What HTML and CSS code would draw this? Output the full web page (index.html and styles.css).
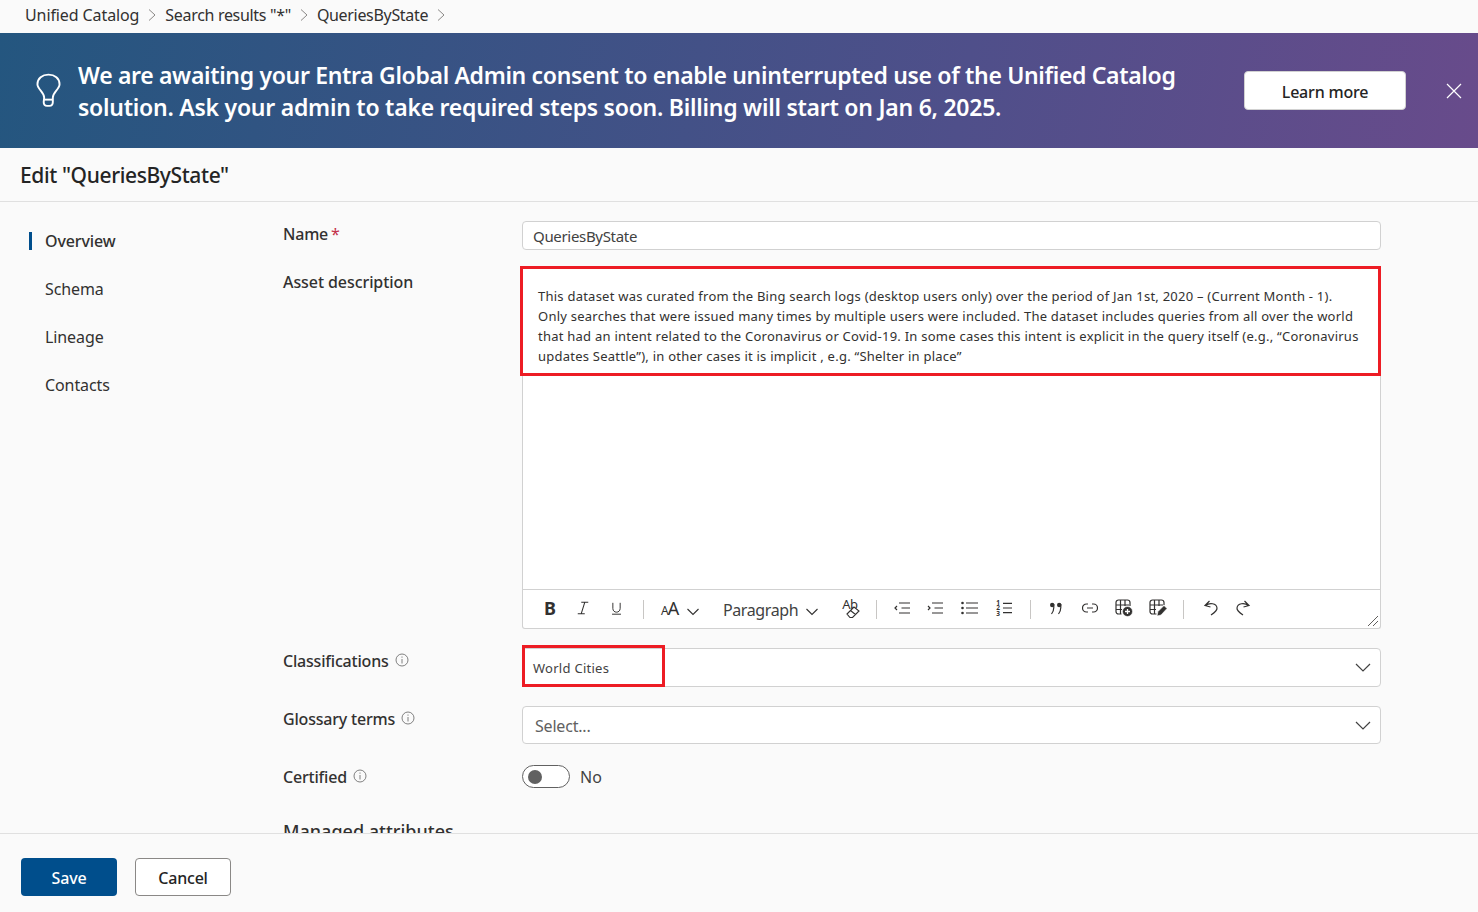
FILE: index.html
```html
<!DOCTYPE html>
<html lang="en-US">
<head>
    <meta charset="UTF-8">
    <meta name="viewport" content="width=device-width, initial-scale=1.0">
    <title>Edit QueriesByState</title>
    <link rel="stylesheet" href="styles.css">
</head>
<body>
    <nav class="breadcrumb">
        <a>Unified Catalog</a>
        <svg class="crumb-sep" viewBox="0 0 10 14"><path d="M2 1.500 8 7l-6 5.500"/></svg>
        <a class="crumb-tight">Search results "*"</a>
        <svg class="crumb-sep" viewBox="0 0 10 14"><path d="M2 1.500 8 7l-6 5.500"/></svg>
        <a class="crumb-tight">QueriesByState</a>
        <svg class="crumb-sep" viewBox="0 0 10 14"><path d="M2 1.500 8 7l-6 5.500"/></svg>
    </nav>

    <section class="banner">
        <svg class="banner-bulb" viewBox="0 0 26 36">
            <path d="M8.500 25.500c0-3-1.200-4.600-3.400-7.200C3.300 16.200 1.500 14 1.500 11.500 1.500 5.500 6.500 1.500 13 1.500s11.500 4 11.500 10c0 2.500-1.800 4.700-3.600 6.800-2.200 2.600-3.400 4.200-3.400 7.200v4.500c0 2.300-1.500 4-3.500 4h-2.500c-2.500 0-3.500-1.700-3.500-4z"/>
            <path d="M8.500 27.500h9"/>
        </svg>
        <p class="banner-text">We are awaiting your Entra Global Admin consent to enable uninterrupted use of the Unified Catalog<br><span class="banner-line2">solution. Ask your admin to take required steps soon. Billing will start on Jan 6, 2025.</span></p>
        <button class="btn-learn" type="button">Learn more</button>
        <svg class="banner-close" viewBox="0 0 16 16"><path d="M1 1l14 14M15 1 1 15"/></svg>
    </section>

    <header class="page-title">
        <h1>Edit "QueriesByState"</h1>
    </header>

    <main class="content">
        <aside class="side-nav">
            <a class="side-link active">Overview</a>
            <a class="side-link">Schema</a>
            <a class="side-link">Lineage</a>
            <a class="side-link">Contacts</a>
        </aside>

        <form class="edit-form">
            <div class="row row-name">
                <label class="field-label">Name <span class="req">*</span></label>
                <div class="text-input">QueriesByState</div>
            </div>

            <div class="row row-desc">
                <label class="field-label label-wide">Asset description</label>
                <div class="editor">
                    <div class="editor-body">
                        <div class="desc-highlight">This dataset was curated from the Bing search logs (desktop users only) over the period of Jan 1st, 2020 – (Current Month - 1).<br>Only searches that were issued many times by multiple users were included. The dataset includes queries from all over the world<br>that had an intent related to the Coronavirus or Covid-19. In some cases this intent is explicit in the query itself (e.g., “Coronavirus<br>updates Seattle”), in other cases it is implicit , e.g. “Shelter in place”</div>
                    </div>
                    <div class="toolbar">
                        <span class="tb-glyph tb-b">B</span>
                        <svg class="tb-icon tb-i" viewBox="0 0 16 16"><path d="M6 1.500h8M2 14.500h8M10 1.500 6 14.500"/></svg>
                        <svg class="tb-icon tb-u" viewBox="0 0 16 16"><path d="M3.500 1v7c0 6 9 6 9 0V1M2.500 15h11"/></svg>
                        <span class="tb-sep sep-1"></span>
                        <span class="tb-glyph tb-aa"><span class="aa-small">A</span>A</span>
                        <svg class="tb-chev tb-chev-aa" viewBox="0 0 14 8"><path d="M1.500 1 7 6.500 12.500 1"/></svg>
                        <span class="tb-para">Paragraph</span>
                        <svg class="tb-chev tb-chev-para" viewBox="0 0 14 8"><path d="M1.500 1 7 6.500 12.500 1"/></svg>
                        <span class="tb-clear">
                            <span class="tb-glyph tb-ab">Ab</span>
                            <svg class="tb-eraser" viewBox="0 0 14 12"><path d="M1 8 8 1l5 4-6.500 6.500H4zM4.500 4.500l5 4"/></svg>
                        </span>
                        <span class="tb-sep sep-2"></span>
                        <svg class="tb-icon tb-out" viewBox="0 0 18 12"><path d="M5 1h11M7.500 6H16M5 11h11M3 4 1 6l2 2"/></svg>
                        <svg class="tb-icon tb-in" viewBox="0 0 18 12"><path d="M5 1h11M7.500 6H16M5 11h11M1 4l2 2-2 2"/></svg>
                        <svg class="tb-icon tb-ul" viewBox="0 0 18 14"><path d="M5 2h12M5 7h12M5 12h12"/><circle class="dot" cx="1.500" cy="2" r="1.300"/><circle class="dot" cx="1.500" cy="7" r="1.300"/><circle class="dot" cx="1.500" cy="12" r="1.300"/></svg>
                        <span class="tb-ol">
                            <span class="tb-num">1<br>2<br>3</span>
                            <svg class="tb-ol-lines" viewBox="0 0 10 14"><path d="M0 2h10M0 7h10M0 12h10"/></svg>
                        </span>
                        <span class="tb-sep sep-3"></span>
                        <svg class="tb-icon tb-quote" viewBox="0 0 14 14"><path d="M4.800 3v3.500C4.800 9 4 11 2.500 13M11.800 3v3.500C11.800 9 11 11 9.500 13"/><circle class="dot" cx="3.200" cy="4" r="2.200"/><circle class="dot" cx="10.200" cy="4" r="2.200"/></svg>
                        <svg class="tb-icon tb-link" viewBox="0 0 16 10"><path d="M6 1H4.500a4 4 0 0 0 0 8H6M10 1h1.500a4 4 0 0 1 0 8H10M5 5h6"/></svg>
                        <svg class="tb-icon tb-table" viewBox="0 0 18 18"><path d="M3.500 1h9a2.500 2.500 0 0 1 2.500 2.500V7M1 3.500A2.500 2.500 0 0 1 3.500 1M1 3.500v9A2.500 2.500 0 0 0 3.500 15h3M1 6h13M1 10.500h6M5.500 1v14M10 1v6"/><circle class="solid" cx="12.500" cy="12.500" r="5"/><path class="cut" d="M12.500 10v5M10 12.500h5"/></svg>
                        <svg class="tb-icon tb-tedit" viewBox="0 0 18 18"><path d="M3.500 1h9A2.500 2.500 0 0 1 15 3.500V6M1 3.500A2.500 2.500 0 0 1 3.500 1M1 3.500v9A2.500 2.500 0 0 0 3.500 15h4M1 6h13M1 10.500h6M5.500 1v14M10 1v6"/><path class="solid" d="M8 17l1-4.500L15 6.500l3 3-6 6.500z"/></svg>
                        <span class="tb-sep sep-4"></span>
                        <svg class="tb-icon tb-undo" viewBox="0 0 16 16"><path d="M6.500 1 2 5.500 7.500 7M2.500 5.500c4-3 11-2.500 11.500 2.500.3 2.500-3 5-6 7"/></svg>
                        <svg class="tb-icon tb-redo" viewBox="0 0 16 16"><path d="M9.500 1 14 5.500 8.500 7M13.500 5.500c-4-3-11-2.500-11.500 2.500-.3 2.500 3 5 6 7"/></svg>
                        <svg class="tb-grip" viewBox="0 0 12 12"><path d="M1 11 11 1M6 11l5-5"/></svg>
                    </div>
                </div>
            </div>

            <div class="row row-class">
                <label class="field-label">Classifications <svg class="info" viewBox="0 0 14 14"><circle cx="7" cy="7" r="6"/><path d="M7 6v4.500M7 3.500v1.200"/></svg></label>
                <div class="select-input">
                    <span class="chip-text">World Cities</span>
                    <span class="chip-highlight"></span>
                    <svg class="select-chev" viewBox="0 0 16 9"><path d="M1 1l7 7 7-7"/></svg>
                </div>
            </div>

            <div class="row row-gloss">
                <label class="field-label">Glossary terms <svg class="info" viewBox="0 0 14 14"><circle cx="7" cy="7" r="6"/><path d="M7 6v4.500M7 3.500v1.200"/></svg></label>
                <div class="select-input select-empty">
                    <span class="placeholder">Select...</span>
                    <svg class="select-chev" viewBox="0 0 16 9"><path d="M1 1l7 7 7-7"/></svg>
                </div>
            </div>

            <div class="row row-cert">
                <label class="field-label label-cert">Certified <svg class="info" viewBox="0 0 14 14"><circle cx="7" cy="7" r="6"/><path d="M7 6v4.500M7 3.500v1.200"/></svg></label>
                <div class="toggle-wrap">
                    <span class="toggle"><span class="knob"></span></span>
                    <span class="toggle-text">No</span>
                </div>
            </div>

            <div class="row">
                <label class="field-label label-section">Managed attributes</label>
            </div>
        </form>
    </main>

    <footer class="actions">
        <button class="btn-save" type="button">Save</button>
        <button class="btn-cancel" type="button">Cancel</button>
    </footer>
</body>
</html>
```

FILE: styles.css
```css
* {
    box-sizing: border-box;
}

html, body {
    height: 100%;
}

body {
    margin: 0;
    display: flex;
    flex-direction: column;
    overflow: hidden;
    background: #fafafa;
    color: #242424;
    font-family: "Noto Sans", "Open Sans", sans-serif;
    font-size: 16px;
}

svg {
    display: block;
    fill: none;
    stroke: currentColor;
}

/* breadcrumb */
.breadcrumb {
    height: 33px;
    flex: none;
    display: flex;
    align-items: center;
    padding: 0 0 3px 25px;
    font-size: 16px;
    letter-spacing: -0.1px;
    color: #323130;
}

.crumb-tight {
    letter-spacing: -0.32px;
}

.crumb-sep {
    width: 10px;
    height: 14px;
    margin: 0 8px;
    color: #8a8886;
    stroke-width: 1;
}

/* banner */
.banner {
    height: 115px;
    flex: none;
    display: flex;
    align-items: center;
    padding-left: 36px;
    color: #fff;
    background: linear-gradient(100deg, #24567f 0%, #4f4f8a 65%, #684b8b 100%);
}

.banner-bulb {
    width: 25px;
    height: 35px;
    stroke-width: 2;
    flex: none;
}

.banner-text {
    margin: 0 0 0 17px;
    width: 1166px;
    flex: none;
    white-space: nowrap;
    font-size: 23px;
    font-weight: 600;
    line-height: 32px;
    letter-spacing: -0.33px;
}

.banner-line2 {
    letter-spacing: -0.25px;
}

.btn-learn {
    width: 162px;
    height: 39px;
    flex: none;
    padding-top: 3px;
    background: #fff;
    border: 1px solid #d1d1d1;
    border-radius: 4px;
    color: #242424;
    font-family: inherit;
    font-size: 16px;
    font-weight: 500;
    letter-spacing: -0.2px;
}

.banner-close {
    width: 16px;
    height: 16px;
    margin-left: 40px;
    stroke-width: 1.200;
    flex: none;
}

/* title */
.page-title {
    height: 54px;
    flex: none;
    display: flex;
    align-items: center;
    padding-left: 20px;
    border-bottom: 1px solid #e0e0e0;
}

.page-title h1 {
    margin: 0;
    font-size: 21px;
    font-weight: 500;
    letter-spacing: -0.38px;
}

/* main area */
.content {
    flex: 1;
    min-height: 0;
    overflow: hidden;
    display: flex;
}

.side-nav {
    width: 283px;
    flex: none;
    display: flex;
    flex-direction: column;
    padding: 15px 0 0 29px;
}

.side-link {
    height: 48px;
    display: flex;
    align-items: center;
    padding-left: 16px;
    font-size: 16px;
    letter-spacing: -0.1px;
    color: #323130;
}

.side-link.active {
    font-weight: 500;
    background: linear-gradient(#004e8c, #004e8c) left center / 3px 18px no-repeat;
}

.edit-form {
    width: 1098px;
    flex: none;
    padding-top: 19px;
}

.row {
    display: grid;
    grid-template-columns: 239px 859px;
}

.field-label {
    display: flex;
    align-items: center;
    gap: 6px;
    height: 26px;
    font-size: 16px;
    font-weight: 500;
    letter-spacing: -0.2px;
    color: #323130;
}

.label-wide {
    letter-spacing: -0.08px;
}

.label-cert {
    margin-top: -1px;
}

.label-section {
    white-space: nowrap;
    font-size: 18px;
    letter-spacing: 0;
}

.req {
    color: #c4314b;
    margin-left: -3px;
    font-weight: 400;
}

.info {
    width: 14px;
    height: 14px;
    color: #616161;
    stroke-width: 0.800;
    margin-top: -3px;
}

.row-name {
    margin-bottom: 16px;
}

.text-input {
    height: 29px;
    display: flex;
    align-items: center;
    padding-left: 10px;
    background: #fff;
    border: 1px solid #d1d1d1;
    border-radius: 4px;
    font-size: 15px;
    letter-spacing: -0.32px;
    color: #424242;
}

/* rich text editor */
.row-desc {
    margin-bottom: 19px;
}

.row-desc .field-label {
    margin-top: 3px;
}

.editor {
    height: 363px;
    display: flex;
    flex-direction: column;
    background: #fff;
    border: 1px solid #d1d1d1;
    border-top: 0;
    border-radius: 0 0 3px 3px;
}

.editor-body {
    flex: 1;
}

.desc-highlight {
    height: 110px;
    margin: 0 -1px 0 -3px;
    padding: 17px 0 0 15px;
    border: 3px solid #ed1c24;
    font-size: 13px;
    line-height: 20px;
    white-space: nowrap;
    letter-spacing: 0.24px;
    color: #323130;
}

.toolbar {
    height: 39px;
    flex: none;
    position: relative;
    display: flex;
    align-items: center;
    border-top: 1px solid #d1d1d1;
    color: #323130;
}

.tb-icon {
    flex: none;
    stroke-width: 1.200;
    margin-top: -2px;
}

.tb-icon .dot {
    fill: currentColor;
    stroke: none;
}

.tb-glyph {
    flex: none;
    line-height: 1;
}

.tb-b {
    width: 16px;
    margin: -3px 0 0 19px;
    font-size: 18px;
    font-weight: 700;
    text-align: center;
}

.tb-i { width: 14px; height: 14px; margin-left: 18px; }
.tb-u { width: 13px; height: 15px; margin-left: 20px; }
.sep-1 { margin-left: 20px; }

.tb-aa {
    width: 20px;
    margin: -3px 0 0 17px;
    font-size: 18px;
    letter-spacing: -1px;
    white-space: nowrap;
}

.aa-small {
    font-size: 12px;
}

.tb-chev-aa { margin-left: 5px; }
.tb-para { margin: 1px 0 0 23px; font-size: 16px; letter-spacing: -0.4px; color: #424242; }
.tb-chev-para { margin-left: 7px; }

.tb-clear {
    position: relative;
    flex: none;
    width: 20px;
    height: 20px;
    margin: -2px 0 0 23px;
}

.tb-ab {
    display: block;
    font-size: 13px;
    letter-spacing: -0.5px;
}

.tb-eraser {
    position: absolute;
    left: 4px;
    top: 8px;
    width: 14px;
    height: 12px;
    stroke-width: 1.100;
    fill: #fff;
}

.sep-2 { margin-left: 14px; }
.tb-out { width: 18px; height: 12px; margin-left: 17px; }
.tb-in { width: 18px; height: 12px; margin-left: 15px; }
.tb-ul { width: 18px; height: 14px; margin-left: 16px; }

.tb-ol {
    flex: none;
    display: flex;
    align-items: center;
    gap: 2px;
    width: 16px;
    margin: -2px 0 0 17px;
}

.tb-num {
    width: 5px;
    font-size: 6.500px;
    font-weight: 700;
    line-height: 5.500px;
}

.tb-ol-lines {
    width: 10px;
    height: 14px;
    stroke-width: 1.200;
}

.sep-3 { margin-left: 18px; }
.tb-quote { width: 14px; height: 14px; margin-left: 18px; }
.tb-link { width: 16px; height: 10px; margin-left: 19px; }
.tb-table { width: 18px; height: 18px; margin-left: 17px; }
.tb-tedit { width: 18px; height: 18px; margin-left: 16px; }
.sep-4 { margin-left: 16px; }
.tb-undo { width: 16px; height: 16px; margin-left: 19px; }
.tb-redo { width: 16px; height: 16px; margin-left: 16px; }

.tb-icon .solid {
    fill: #323130;
    stroke: #fff;
    stroke-width: 0.600;
}

.tb-icon .cut {
    stroke: #fff;
    stroke-width: 1.300;
}

.tb-sep {
    flex: none;
    width: 1px;
    height: 19px;
    background: #c8c6c4;
}

.tb-chev {
    flex: none;
    width: 14px;
    height: 8px;
    margin-top: 6px;
    stroke-width: 1.100;
}

.tb-grip {
    position: absolute;
    right: 1px;
    bottom: 1px;
    width: 12px;
    height: 12px;
    color: #605e5c;
    stroke-width: 1;
}

/* selects */
.row-class {
    margin-bottom: 19px;
}

.select-input {
    position: relative;
    height: 39px;
    display: flex;
    align-items: center;
    justify-content: space-between;
    padding: 0 9px 0 10px;
    background: #fff;
    border: 1px solid #d1d1d1;
    border-radius: 4px;
}

.select-empty {
    height: 38px;
    padding-left: 12px;
}

.chip-text {
    font-size: 13px;
    letter-spacing: 0.27px;
    color: #424242;
}

.chip-highlight {
    position: absolute;
    left: -1px;
    top: -4px;
    width: 143px;
    height: 42px;
    border: 3px solid #ed1c24;
}

.placeholder {
    margin-top: 2px;
    font-size: 16px;
    letter-spacing: -0.2px;
    color: #616161;
}

.select-chev {
    width: 16px;
    height: 9px;
    color: #424242;
    stroke-width: 1.200;
}

.row-gloss {
    margin-bottom: 21px;
}

.row-cert {
    margin-bottom: 28px;
}

.toggle-wrap {
    display: flex;
    align-items: center;
    gap: 10px;
    height: 23px;
}

.toggle {
    width: 48px;
    height: 23px;
    display: flex;
    align-items: center;
    padding-left: 5px;
    background: #fff;
    border: 1px solid #616161;
    border-radius: 12px;
}

.knob {
    width: 14px;
    height: 14px;
    border-radius: 50%;
    background: #616161;
}

.toggle-text {
    font-size: 16px;
    color: #424242;
}

/* footer */
.actions {
    height: 79px;
    flex: none;
    display: flex;
    align-items: flex-start;
    gap: 18px;
    padding: 24px 0 0 21px;
    background: #fafafa;
    border-top: 1px solid #e0e0e0;
}

.actions button {
    width: 96px;
    height: 38px;
    padding-top: 3px;
    border-radius: 4px;
    font-family: inherit;
    font-size: 16px;
    font-weight: 500;
    letter-spacing: -0.2px;
}

.btn-save {
    background: #004e8c;
    border: 0;
    color: #fff;
}

.btn-cancel {
    background: #fff;
    border: 1px solid #8a8886;
    color: #242424;
}
```
